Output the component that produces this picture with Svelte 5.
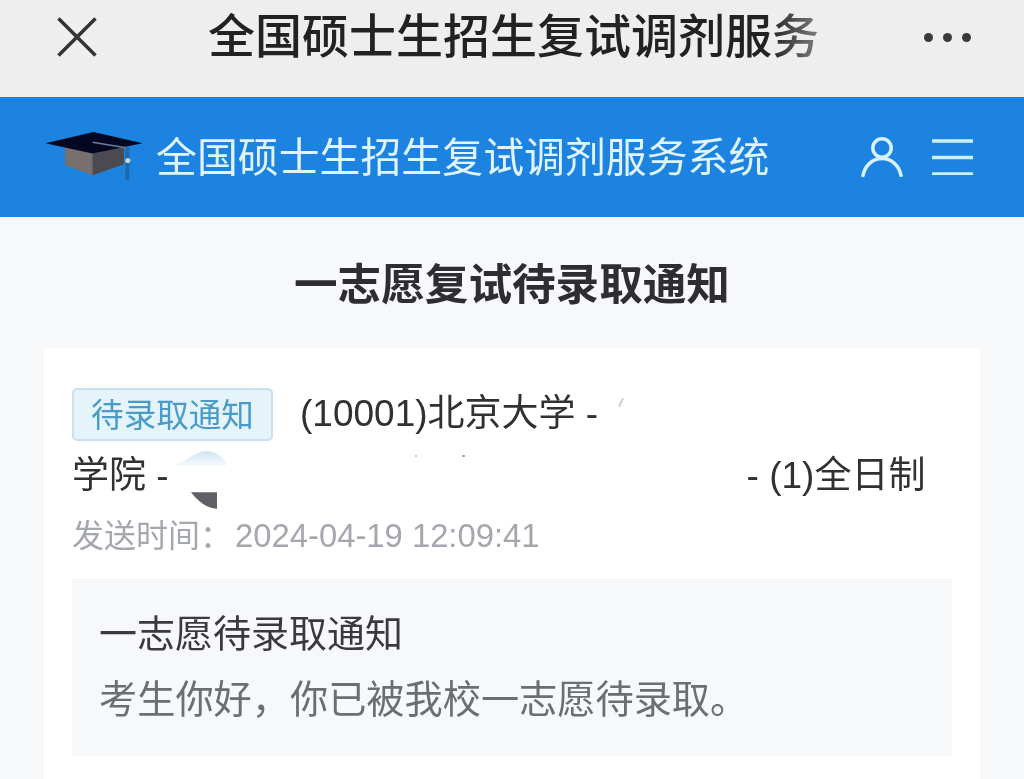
<script>
  const title = '全国硕士生招生复试调剂服务';
</script>

<div class="page">
  <header class="topbar">
    <svg class="close" viewBox="0 0 40 40" aria-hidden="true"><path d="M1.5 1.5 L38.5 38.5 M38.5 1.5 L1.5 38.5" /></svg>
    <div class="toptitle">{title}</div>
    <div class="dots"><i></i><i></i><i></i></div>
  </header>

  <nav class="brand">
    <svg class="cap" viewBox="0 0 100 52" aria-hidden="true">
      <polygon points="20,14 50,22 80,14 80,33 48,44 20,34" fill="#77706f" />
      <polygon points="48,22 80,14 80,33 48,44" fill="#4b4a50" />
      <polygon points="0,11.5 49,0 99,11.5 48,22" fill="#030722" />
      <path d="M48 10.5 L82 16" stroke="#6f7f9f" stroke-width="1.6" />
      <rect x="81.5" y="16" width="4" height="33" fill="#2268a8" />
      <circle cx="84" cy="29" r="2.6" fill="#c9d3da" />
    </svg>
    <div class="brandname">{title}系统</div>
    <svg class="user" viewBox="0 0 42 40" aria-hidden="true">
      <circle cx="21" cy="11" r="9.2" />
      <path d="M2 38.5 C4 28 12 21.5 21 21.5 C30 21.5 38 28 40 38.5" />
    </svg>
    <svg class="menu" viewBox="0 0 41 36" aria-hidden="true"><path d="M0 2 H41 M0 18.5 H41 M0 35 H41" /></svg>
  </nav>

  <main class="content">
    <h1>一志愿复试待录取通知</h1>
    <section class="card">
      <span class="speck mark" aria-hidden="true"></span>
      <span class="speck dot1" aria-hidden="true"></span>
      <span class="speck dot2" aria-hidden="true"></span>
      <div class="line first">
        <span class="badge">待录取通知</span>
        <span class="school">(10001)北京大学 -</span>
      </div>
      <div class="line second">
        <span>学院 -</span>
        <span class="smudges" aria-hidden="true">
          <svg class="cloud" viewBox="0 0 52 16">
            <defs>
              <linearGradient id="fade" x1="0" y1="0" x2="0" y2="1">
                <stop offset="0" stop-color="#cfe5f1" />
                <stop offset="1" stop-color="#f6fbfd" />
              </linearGradient>
            </defs>
            <path d="M0 15 C10 12 16 6 26 2 C36 -1 46 3 52 13 L52 16 L0 16Z" fill="url(#fade)" />
          </svg>
          <svg class="wedge" viewBox="0 0 30 19"><path d="M0 0 H30 V19 C18 19 8 10 0 0Z" /></svg>
        </span>
        <span>- (1)全日制</span>
      </div>
      <div class="sent"><span class="sentlabel">发送时间：</span><span>2024-04-19 12:09:41</span></div>
      <div class="notice">
        <div class="noticetitle">一志愿待录取通知</div>
        <div class="noticebody">考生你好，你已被我校一志愿待录取。</div>
      </div>
    </section>
  </main>
</div>

<style>
  :global(body) {
    margin: 0;
    background: #f7f8fa;
  }
  .page {
    width: 1024px;
    height: 779px;
    overflow: hidden;
    background: #f7f8fa;
    font-family: "Liberation Sans", "Noto Sans CJK SC", sans-serif;
    color: #303133;
    filter: blur(0.4px);
  }
  .topbar {
    height: 97px;
    background: #eeeeee;
    display: flex;
    align-items: center;
    padding-left: 57px;
    padding-bottom: 23px;
    box-sizing: border-box;
  }
  .close {
    width: 40px;
    height: 40px;
    flex: none;
  }
  .close path {
    stroke: #333;
    stroke-width: 3.5;
    fill: none;
  }
  .toptitle {
    margin-left: 111px;
    width: 611px;
    font-size: 47px;
    font-weight: 500;
    line-height: 60px;
    color: #222;
    white-space: nowrap;
    -webkit-mask-image: linear-gradient(to right, #000 92%, rgba(0, 0, 0, 0.55) 100%);
    mask-image: linear-gradient(to right, #000 92%, rgba(0, 0, 0, 0.55) 100%);
  }
  .dots {
    margin-left: 105px;
    display: flex;
    gap: 10px;
  }
  .dots i {
    width: 9px;
    height: 9px;
    border-radius: 50%;
    background: #3a3a3a;
  }
  .brand {
    height: 120px;
    background: #1c83e0;
    display: flex;
    align-items: center;
    padding-left: 45px;
    box-sizing: border-box;
  }
  .cap {
    width: 99px;
    height: 51px;
    flex: none;
  }
  .brandname {
    margin-left: 12px;
    width: 614px;
    font-size: 40.9px;
    line-height: 50px;
    color: #e0f4fb;
    white-space: nowrap;
    padding-top: 1px;
  }
  .user {
    margin-left: 91px;
    width: 42px;
    height: 40px;
    flex: none;
  }
  .user circle, .user path {
    fill: none;
    stroke: #d8f1fb;
    stroke-width: 3.5;
    stroke-linecap: round;
  }
  .menu {
    margin-left: 29px;
    width: 41px;
    height: 36px;
    flex: none;
  }
  .menu path {
    stroke: #cdeefb;
    stroke-width: 3.5;
    fill: none;
  }
  .content {
    padding: 0 44px;
  }
  h1 {
    margin: 0;
    height: 131px;
    line-height: 136px;
    text-align: center;
    font-size: 43.6px;
    font-weight: 700;
    color: #2e2e31;
  }
  .card {
    position: relative;
    background: #fff;
    border-radius: 4px;
    height: 500px;
    padding: 38px 28px 0;
    box-sizing: border-box;
  }
  .speck {
    position: absolute;
    background: #c9cbce;
  }
  .mark {
    left: 576px;
    top: 50px;
    width: 2px;
    height: 9px;
    transform: rotate(25deg);
  }
  .dot1 {
    left: 371px;
    top: 107px;
    width: 2px;
    height: 2px;
  }
  .dot2 {
    left: 418px;
    top: 107px;
    width: 3px;
    height: 2px;
    background: #a9abaf;
  }
  .line {
    display: flex;
    align-items: center;
    font-size: 37px;
    white-space: nowrap;
  }
  .first {
    height: 55px;
  }
  .badge {
    box-sizing: border-box;
    width: 201px;
    height: 53px;
    margin-top: 2px;
    line-height: 52px;
    text-align: center;
    border: 2px solid #c8e0ef;
    border-radius: 5px;
    background: #e5f3fa;
    color: #4a9cc8;
    font-size: 32.6px;
  }
  .school {
    margin-left: 27px;
    margin-bottom: 7px;
  }
  .second {
    margin-top: 2px;
    height: 60px;
  }
  .second > span:first-child {
    margin-bottom: 2px;
  }
  .second > span:last-child {
    margin-bottom: 2px;
  }
  .smudges {
    position: relative;
    width: 562px;
    height: 60px;
    margin-left: 16px;
    flex: none;
  }
  .cloud {
    position: absolute;
    left: -11px;
    top: 7px;
    width: 52px;
    height: 16px;
  }
  .wedge {
    position: absolute;
    left: 6px;
    top: 49px;
    width: 26px;
    height: 17px;
    fill: #5f6066;
  }
  .sent {
    margin-top: 11px;
    height: 44px;
    line-height: 44px;
    font-size: 32.8px;
    color: #a4a7ad;
    white-space: nowrap;
  }
  .sentlabel {
    font-size: 32px;
    margin-right: 3px;
  }
  .notice {
    margin-top: 20px;
    height: 178px;
    background: #f7f8fa;
    padding: 31px 27px 0;
    box-sizing: border-box;
    white-space: nowrap;
  }
  .noticetitle {
    font-size: 38px;
    line-height: 50px;
    color: #3a3a3d;
  }
  .noticebody {
    margin-top: 16px;
    font-size: 38.2px;
    line-height: 50px;
    color: #6b6e73;
  }
</style>
